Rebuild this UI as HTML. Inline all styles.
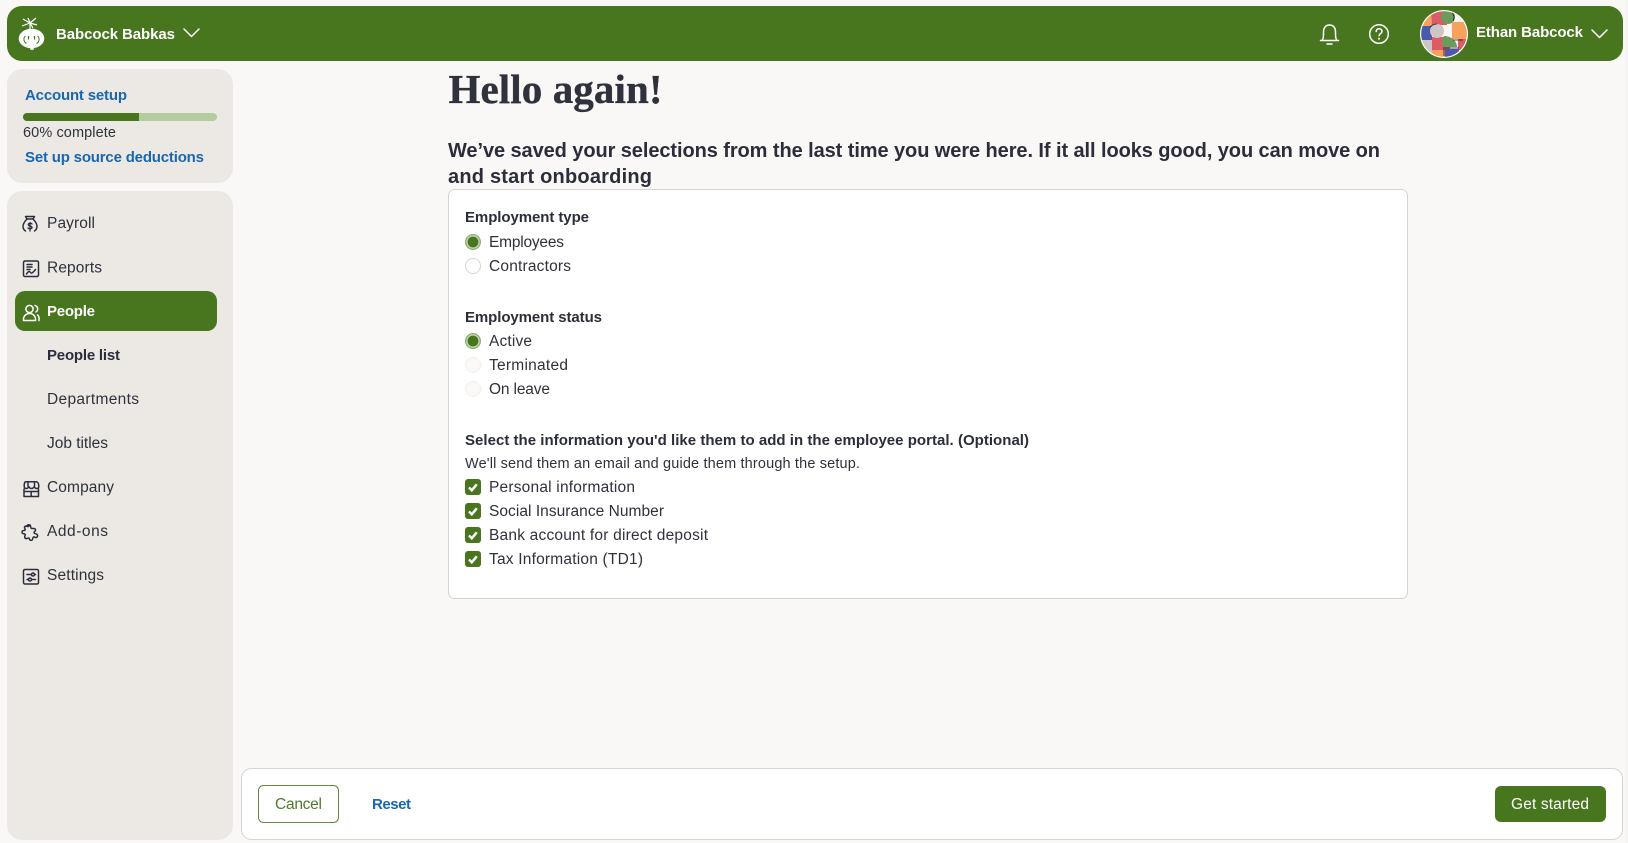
<!DOCTYPE html>
<html lang="en"><head><meta charset="utf-8"><title>Babcock Babkas</title>
<style>
html,body{margin:0;padding:0;width:1628px;height:843px;overflow:hidden;background:#faf8f6}
svg{display:block;position:absolute;left:0;top:0}
text{font-family:"Liberation Sans",sans-serif;font-size:15.5px;fill:#2f313c}
.b{font-weight:700;font-size:15px;fill:#2b2d3a}
.w{fill:#fff}
.l{fill:#1a66b0;font-weight:700;font-size:15px}
.i{fill:none;stroke:#2b2d3a;stroke-width:1.5;stroke-linecap:round;stroke-linejoin:round}
.iw{fill:none;stroke:#fff;stroke-width:1.5;stroke-linecap:round;stroke-linejoin:round}
</style></head><body>
<svg width="1628" height="843" viewBox="0 0 1628 843" xmlns="http://www.w3.org/2000/svg">
<defs><clipPath id="av"><circle cx="1444" cy="34" r="22.800"/></clipPath></defs>
<rect x="0" y="0" width="1628" height="843" fill="#faf8f6"/>
<rect x="1625" y="0" width="3" height="843" fill="#f7f5f3"/>

<!-- header -->
<rect x="7" y="6" width="1616" height="55" rx="15" fill="#47761f"/>
<g>
<ellipse cx="31.500" cy="38.500" rx="12.800" ry="9.800" fill="#fff"/>
<circle cx="32" cy="48" r="2" fill="#fff"/>
<path d="M30 33V23M30 23L23 19M30 23L36 18M30 23L22 26M30 23L37 25M30 23L28 18M30 23L33 28" stroke="#fff" stroke-width="1.200" fill="none"/>
<path d="M25.500 36c-2.500 2-2 6 1 7.500M37.500 36c2.500 2 2 6-1 7.500" stroke="#47761f" stroke-width="1" fill="none"/>
<path d="M28.500 36v3.500M34.500 36v3.500" stroke="#47761f" stroke-width="1.300"/>
</g>
<text class="w b" x="56" y="39" textLength="119" lengthAdjust="spacing">Babcock Babkas</text>
<path class="iw" d="M184 29l7.500 7.500 7.500-7.500" stroke-width="1.600"/>
<!-- bell -->
<path class="iw" d="M1322 40.500c1.500-2 1.500-4 1.500-8.500 0-4.500 2.500-7 6-7s6 2.500 6 7c0 4.500 0 6.500 1.500 8.500M1320.500 40.500h18M1327 44h5"/>
<!-- help -->
<circle cx="1379" cy="34" r="9.300" class="iw"/>
<path class="iw" d="M1376.200 31.500c0-1.800 1.300-2.800 2.900-2.800s2.900 1 2.900 2.600c0 2.400-2.900 2.300-2.900 4.400"/>
<circle cx="1379" cy="38.700" r="1" fill="#fff"/>
<!-- avatar -->
<circle cx="1444" cy="34" r="24" fill="#fff"/>
<g clip-path="url(#av)">
<rect x="1420" y="10" width="48" height="48" fill="#fbf6f2"/>
<rect x="1421" y="12" width="12" height="14" fill="#f6a25c"/>
<path d="M1431 11h16v14h-15z" fill="#dd5b66"/>
<circle cx="1448" cy="17" r="7" fill="#6d9b5c"/>
<rect x="1452" y="22" width="16" height="17" fill="#f6a25c"/>
<rect x="1420" y="26" width="12" height="14" fill="#4a59ab"/>
<rect x="1432" y="37" width="18" height="13" fill="#dd5b66"/>
<circle cx="1437" cy="31" r="7" fill="#cdc5c6"/>
<rect x="1420" y="40" width="12" height="14" fill="#cdc5c6"/>
<rect x="1458" y="39" width="10" height="11" fill="#dd5b66"/>
<path d="M1443 47a11 11 0 0 1 1-11c7 0 13 5 13 11z" fill="#6d9b5c"/>
<rect x="1432" y="50" width="13" height="9" fill="#f6a25c"/>
<rect x="1445" y="49" width="14" height="10" fill="#4a59ab"/>
<path d="M1453 21c2-3 1-7-2-10M1430 27c2-2 5-3 7-3M1453 40h10M1444 47v9M1445 48h14" stroke="#1d1d22" stroke-width=".8" fill="none"/>
</g>
<text class="w b" x="1476" y="37" textLength="107" lengthAdjust="spacing">Ethan Babcock</text>
<path class="iw" d="M1592 30l7.500 7.500 7.500-7.500" stroke-width="1.600"/>

<!-- account setup -->
<rect x="7" y="69" width="226" height="114" rx="15" fill="#ece9e5"/>
<text class="l" x="25" y="100" textLength="102" lengthAdjust="spacing">Account setup</text>
<rect x="23" y="113" width="194" height="8" rx="4" fill="#b5cca0"/>
<path d="M27 113h112v8H27a4 4 0 0 1 0-8z" fill="#47761f"/>
<text x="23" y="137" style="font-size:14.5px" textLength="93" lengthAdjust="spacing">60% complete</text>
<text class="l" x="25" y="162" textLength="179" lengthAdjust="spacing">Set up source deductions</text>

<!-- nav -->
<rect x="7" y="191" width="226" height="649" rx="15" fill="#ece9e5"/>
<rect x="15" y="291" width="202" height="40" rx="10" fill="#47761f"/>

<!-- payroll icon -->
<g class="i"><path d="M27 219l-1.500-2.500h9L33 219M27 219h6"/><path d="M27 219c-2.500 2.500-4 5-4 7.500 0 2 1 3.500 2.500 4.500M33 219c2.500 2.500 4 5 4 7.500 0 2-1 3.500-2.500 4.500"/><path d="M32 224c-.5-1-3.700-1-3.700.6 0 1.900 3.700 1 3.700 2.900 0 1.600-3.300 1.600-4 .4M30 222.500v8.500" stroke-width="1.300"/></g>
<text x="47" y="228" textLength="48" lengthAdjust="spacing">Payroll</text>
<!-- reports icon -->
<g class="i"><rect x="23.500" y="261" width="15" height="15.500" rx="1.500"/><path d="M27 264.500h5M27 267h5M27 269.500h3M26.500 274c2-3 3-3 4-1.500s2.500 0 5-3"/></g>
<text x="47" y="272.700" textLength="55" lengthAdjust="spacing">Reports</text>
<!-- people icon -->
<g class="iw"><circle cx="29.500" cy="309" r="3.600"/><path d="M23.500 320.500c-.5-4 2.300-7 6-7s6.500 3 6 7z"/><path d="M35 305.500a3.600 3.600 0 0 1 1 6.500M37.500 315c1.300 1 1.800 3.300 1.500 5.500"/></g>
<text class="w b" x="47" y="316" textLength="48" lengthAdjust="spacing">People</text>
<text class="b" x="47" y="360" textLength="73" lengthAdjust="spacing">People list</text>
<text x="47" y="404" textLength="92" lengthAdjust="spacing">Departments</text>
<text x="47" y="448" textLength="61" lengthAdjust="spacing">Job titles</text>
<!-- company icon -->
<g class="i"><path d="M26 481.700h10c1.500 0 2.800 1.500 2.800 4.500 0 1.500-.8 2.300-2 2.300s-2-.8-2.600-1.800c-.5 1-1.500 1.800-2.700 1.800s-2.200-.8-2.700-1.800c-.6 1-1.400 1.800-2.600 1.800s-2-.8-2-2.300c0-3 .3-4.500 1.800-4.500z"/><path d="M24 489v7.500h14.500V489M24 491.500h14.500M31.200 491.500v5M28 482v4M34.500 482v4"/></g>
<text x="47" y="492" textLength="67" lengthAdjust="spacing">Company</text>
<!-- add-ons icon -->
<path class="i" d="M27 526.500c0-2 3-2.500 3.500-.5.400 1.300 0 2 1 2.500h2.500c1.200 0 1.800 1 1.500 2-.3 1-1.500.8-1.500 2s1.500 1 2.500 1.500c1.500.8 1.500 3-.3 3.500-1.200.3-1.700-1-2.700-.5s-.5 1.500-1 2.500c-.7 1.300-2.800 1-3-.5-.1-1-1-1.300-1.800-.8-.9.5-2 .7-2.700-.2-.8-1-.1-2 .2-2.800.3-.8-.4-1.400-1.400-1.400-1.500 0-2.300-1.300-1.600-2.500.6-1 1.800-.6 2.600-1 1-.5 0-1.500-.2-2.300-.4-1.600 1.200-2.300 2.400-1.700 1 .5 1.500.2 2-.3z"/>
<text x="47" y="536" textLength="61" lengthAdjust="spacing">Add-ons</text>
<!-- settings icon -->
<g class="i"><rect x="23.500" y="569.500" width="15" height="14.500" rx="1.500"/><path d="M27 574.500h4M35 574.500h.5M27 579.500h1M32 579.500h3.500"/><circle cx="33" cy="574.500" r="1.500"/><circle cx="30" cy="579.500" r="1.500"/></g>
<text x="47" y="580" textLength="57" lengthAdjust="spacing">Settings</text>

<!-- heading -->
<text x="448.500" y="103" style="font-family:'Liberation Serif',serif;font-size:41px;font-weight:700;stroke:#2b2d3a;stroke-width:.35" textLength="214" lengthAdjust="spacing">Hello again!</text>
<text class="b" x="448" y="157" style="font-size:20px" textLength="932" lengthAdjust="spacing">We’ve saved your selections from the last time you were here. If it all looks good, you can move on</text>
<text class="b" x="448" y="183" style="font-size:20px" textLength="204" lengthAdjust="spacing">and start onboarding</text>

<!-- card -->
<rect x="448.500" y="189.500" width="959" height="409" rx="6" fill="#fff" stroke="#d8d3d0"/>
<text class="b" x="465" y="222" textLength="124" lengthAdjust="spacing">Employment type</text>
<circle cx="473" cy="242" r="8" fill="#8db072"/><circle cx="473" cy="242" r="6.700" fill="#c5d6b5"/><circle cx="473" cy="242" r="5.400" fill="#47761f"/>
<text x="489" y="247" textLength="75" lengthAdjust="spacing">Employees</text>
<circle cx="473" cy="266" r="7.500" fill="#fff" stroke="#d8d3d0"/>
<text x="489" y="271" textLength="82" lengthAdjust="spacing">Contractors</text>
<text class="b" x="465" y="322" textLength="137" lengthAdjust="spacing">Employment status</text>
<circle cx="473" cy="341" r="8" fill="#8db072"/><circle cx="473" cy="341" r="6.700" fill="#c5d6b5"/><circle cx="473" cy="341" r="5.400" fill="#47761f"/>
<text x="489" y="346" textLength="43" lengthAdjust="spacing">Active</text>
<circle cx="473" cy="365" r="7.500" fill="#faf9f8" stroke="#f2f0ee"/>
<text x="489" y="370" textLength="79" lengthAdjust="spacing">Terminated</text>
<circle cx="473" cy="389" r="7.500" fill="#faf9f8" stroke="#f2f0ee"/>
<text x="489" y="394" textLength="61" lengthAdjust="spacing">On leave</text>
<text class="b" x="465" y="445" textLength="564" lengthAdjust="spacing">Select the information you'd like them to add in the employee portal. (Optional)</text>
<text x="465" y="468" style="font-size:14.5px" textLength="395" lengthAdjust="spacing">We'll send them an email and guide them through the setup.</text>

<rect x="465" y="479" width="16" height="16" rx="3" fill="#47761f"/><path d="M469 487.500l2.800 2.800 5-6" fill="none" stroke="#fff" stroke-width="2.400"/>
<text x="489" y="492" textLength="146" lengthAdjust="spacing">Personal information</text>
<rect x="465" y="503" width="16" height="16" rx="3" fill="#47761f"/><path d="M469 511.500l2.800 2.800 5-6" fill="none" stroke="#fff" stroke-width="2.400"/>
<text x="489" y="516" textLength="175" lengthAdjust="spacing">Social Insurance Number</text>
<rect x="465" y="527" width="16" height="16" rx="3" fill="#47761f"/><path d="M469 535.500l2.800 2.800 5-6" fill="none" stroke="#fff" stroke-width="2.400"/>
<text x="489" y="540" textLength="219" lengthAdjust="spacing">Bank account for direct deposit</text>
<rect x="465" y="551" width="16" height="16" rx="3" fill="#47761f"/><path d="M469 559.500l2.800 2.800 5-6" fill="none" stroke="#fff" stroke-width="2.400"/>
<text x="489" y="564" textLength="154" lengthAdjust="spacing">Tax Information (TD1)</text>

<!-- footer -->
<rect x="241.500" y="768.500" width="1381" height="71" rx="10" fill="#fff" stroke="#d8d3d0"/>
<rect x="258.500" y="785.500" width="80" height="37" rx="5" fill="#fff" stroke="#47761f" stroke-opacity=".85"/>
<text x="275" y="809" style="fill:#4f7a2c" textLength="47" lengthAdjust="spacing">Cancel</text>
<text class="l" x="372" y="809" textLength="39" lengthAdjust="spacing">Reset</text>
<rect x="1495" y="786" width="111" height="36" rx="6" fill="#47761f"/>
<text class="w" x="1511" y="809" textLength="78" lengthAdjust="spacing">Get started</text>
</svg>
</body></html>
